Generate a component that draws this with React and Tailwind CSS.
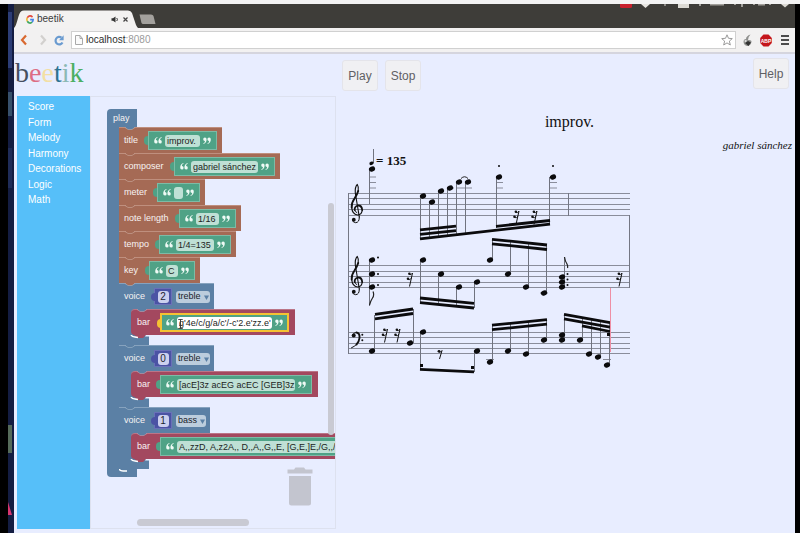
import React from "react";

const sans = "font-['Liberation_Sans',Arial,sans-serif]";

/* ---------- browser chrome ---------- */

function DesktopStrip() {
  return (
    <div className="flex w-[6px] shrink-0 flex-col bg-[#141d42]">
      <div className="mt-2 h-14 w-1 bg-[#2c3d75]" />
      <div className="mt-6 h-6 w-1 bg-[#37506b]" />
      <div className="mt-8 h-10 w-1 bg-[#1f2c58]" />
      <div className="mt-auto h-7 w-1 bg-[#566b5a]" />
      <svg className="mb-4 mt-12 h-4 w-1" viewBox="0 0 4 16" aria-hidden="true">
        <path d="M0 1L4 14H0Z" fill="#d8356f" />
      </svg>
    </div>
  );
}

function GoogleMark() {
  return (
    <svg className="h-[9px] w-[8px]" viewBox="0 0 18 18" preserveAspectRatio="none" fill="none" strokeWidth="3.4" aria-hidden="true">
      <path d="M14.6 4.2A7.2 7.2 0 0 0 3 5.4" stroke="#e2483d" />
      <path d="M3 5.4A7.2 7.2 0 0 0 3 12.6" stroke="#f0b62b" />
      <path d="M3 12.6A7.2 7.2 0 0 0 13.8 14.4" stroke="#3ba55b" />
      <path d="M13.8 14.4A7 7 0 0 0 16.2 9.2H9.4" stroke="#4382e8" />
    </svg>
  );
}

function TabBar() {
  return (
    <div className="relative flex h-6 items-end overflow-hidden bg-[#3e3d39]">
      <div className="relative h-[18px] w-[124px]">
        <svg className="absolute inset-0 h-full w-full" viewBox="0 0 124 18" aria-hidden="true">
          <path d="M0 18C3 16 4 4 7 1.5Q8 0.5 10 0.5H114Q117 0.5 118 3L122 15Q123 17 124 18Z" fill="#f3f2f1" />
        </svg>
        <div className="relative flex h-full items-center pl-[12px] pr-[10px]">
          <GoogleMark />
          <span className={"ml-[3px] flex-1 text-[10px] leading-none text-[#3c3c3c] " + sans}>beetik</span>
          <svg className="h-[7px] w-[8px]" viewBox="0 0 16 14" aria-hidden="true">
            <path d="M1 4.5H4L9 1V13L4 9.500H1Z" fill="#333" />
            <path d="M11.500 4Q14 7 11.500 10" fill="none" stroke="#333" strokeWidth="2" />
          </svg>
          <button aria-label="Close tab" className="ml-[4px]">
            <svg className="h-[5px] w-[5px]" viewBox="0 0 10 10" aria-hidden="true">
              <path d="M1 1L9 9M9 1L1 9" stroke="#444" strokeWidth="2.4" />
            </svg>
          </button>
        </div>
      </div>
      <button aria-label="New tab" className="mb-[3px] h-[11px] w-[18px]">
        <svg className="h-full w-full" viewBox="0 0 18 11" aria-hidden="true">
          <path d="M1.500 0.500H13Q15 0.500 15.500 2L17.500 10H5Q4 10 3.500 9Z" fill="#a3a19d" />
        </svg>
      </button>
      <svg className="absolute right-0 top-0 h-[4px] w-[180px]" viewBox="0 0 180 4" aria-hidden="true">
        <path d="M5 0H17V3Q17 4 15 4H7Q5 4 5 3Z" fill="#c8202c" />
        <path d="M26 0H35L30.500 4Z" fill="#e8e6e2" />
        <path d="M49 0H51V2H49Z" fill="#8a8884" />
        <path d="M63 0H74V4H63Z" fill="#dcdad4" />
        <path d="M84 0H86V2H84ZM95 0H109V1.500H95ZM119 0H121V1H119ZM126 0H128V3H126ZM138 0H140V1H138ZM143 0H150V1.500H143ZM154 0H156V1H154Z" fill="#a19f9a" />
        <path d="M166 0H174L170 3.500Z" fill="#dcdad4" />
      </svg>
    </div>
  );
}

function Toolbar() {
  return (
    <div className="flex h-[26px] items-center border-b-2 border-[#d5d5de] bg-[#f2f1f1]">
      <button aria-label="Back" className="ml-[6px] h-3 w-2">
        <svg className="h-full w-full" viewBox="0 0 8 12" aria-hidden="true">
          <path d="M6 1.500L2 6L6 10.500" fill="none" stroke="#d9692f" strokeWidth="2.200" />
        </svg>
      </button>
      <button aria-label="Forward" className="ml-[11px] h-3 w-2">
        <svg className="h-full w-full" viewBox="0 0 8 12" aria-hidden="true">
          <path d="M2 1.500L6 6L2 10.500" fill="none" stroke="#d2d0ce" strokeWidth="2.200" />
        </svg>
      </button>
      <button aria-label="Reload" className="ml-[7px] h-[11px] w-[10px]">
        <svg className="h-full w-full" viewBox="0 0 10 11" aria-hidden="true">
          <path d="M8.500 7.500A3.700 3.800 0 1 1 7.500 2.600" fill="none" stroke="#6a9bd0" strokeWidth="2.200" />
          <path d="M9.600 0.300V5.200H5Z" fill="#6a9bd0" />
        </svg>
      </button>
      <div className="ml-[7px] flex h-[18px] flex-1 items-center border border-[#d0d0d0] bg-white pl-[3px] pr-[2px]">
        <svg className="h-[10px] w-[8px] shrink-0" viewBox="0 0 8 10" aria-hidden="true">
          <path d="M0.500 0.500H5L7.500 3.500V9.500H0.500ZM5 0.500V3.500H7.500" fill="#fafafa" stroke="#a9a9a9" />
        </svg>
        <div className={"ml-[3px] flex-1 text-[10px] leading-none " + sans}>
          <a href="#address" className="text-[#2d2d2d]">
            localhost<span className="text-[#9b9b9b]">:8080</span>
          </a>
        </div>
        <svg className="h-[12px] w-[12px] shrink-0" viewBox="0 0 12 12" aria-hidden="true">
          <path d="M6 0.800L7.500 4.300L11.300 4.600L8.400 7.100L9.300 11L6 8.900L2.700 11L3.600 7.100L0.700 4.600L4.500 4.300Z" fill="#fff" stroke="#9a9a9a" />
        </svg>
      </div>
      <svg className="ml-[7px] h-[13px] w-[9px]" viewBox="0 0 9 13" aria-hidden="true">
        <path d="M7.500 0.500Q3 2 3 5Q0.500 5 0.500 8Q1 12 5 12Q8.500 11 8.500 7Q7 5.500 5 6Q5 3 7.500 0.500Z" fill="#8f908e" />
        <path d="M2 9L5 7L8 8.500L5.500 12Z" fill="#333" />
        <path d="M1.500 6.500Q3 5.500 4 7L2 8.500Z" fill="#e0e0e0" />
      </svg>
      <svg className="ml-[8px] h-[13px] w-[12px]" viewBox="0 0 12 13" aria-hidden="true">
        <path d="M3.500 0.500H8.500L11.800 4V9L8.500 12.500H3.500L0.200 9V4Z" fill="#c4161c" />
        <text x="6" y="8.500" textAnchor="middle" fontSize="5" fontWeight="700" fill="#fff" fontFamily="Liberation Sans, sans-serif">ABP</text>
      </svg>
      <button aria-label="Menu" className="ml-[9px] mr-[6px] flex w-[8px] flex-col gap-[2px]">
        <span className="h-[2px] bg-[#4c4c4c]" />
        <span className="h-[2px] bg-[#4c4c4c]" />
        <span className="h-[2px] bg-[#4c4c4c]" />
      </button>
    </div>
  );
}

/* ---------- block editor ---------- */

function Quote({ close }) {
  return (
    <svg className={"h-[7px] w-[8px] shrink-0 " + (close ? "rotate-180" : "")} viewBox="0 0 8 7" aria-hidden="true">
      <path d="M3.600 0.400Q1.800 1.200 1.800 2.900A1.700 1.800 0 1 1 0.200 4.600Q0.200 1.200 3.300 0Z" fill="#eefaf5" />
      <path d="M7.800 0.400Q6 1.200 6 2.900A1.700 1.800 0 1 1 4.400 4.600Q4.400 1.200 7.500 0Z" fill="#eefaf5" />
    </svg>
  );
}

function Notch({ className }) {
  return (
    <svg className={"absolute left-[6px] top-[-1px] h-[3px] w-[10px] " + className} viewBox="0 0 10 3" aria-hidden="true">
      <path d="M0 0H10L7 2.500H3Z" fill="currentColor" />
      <path d="M0 0.500L3 2.500H7L10 0.500" fill="none" stroke="#fff" strokeOpacity="0.250" />
    </svg>
  );
}

function TextBlock({ label, value, field, selected }) {
  return (
    <div className={"relative flex h-[19px] shrink-0 items-center bg-[#4fa286] " + (selected ? "border-2 border-[#f5c232] px-[4px]" : "border border-[#7dbba6] px-[5px]")}>
      <span className={"absolute left-[-5px] top-[4px] h-[9px] w-[4px] rounded-l-sm " + (selected ? "bg-[#f5c232]" : "bg-[#4fa286]")} />
      <Quote />
      <input
        aria-label={label}
        defaultValue={value}
        spellCheck={false}
        className={"mx-[3px] h-[12px] rounded-[3px] py-0 pl-[2px] pr-0 text-[9px] leading-none text-[#1c2422] outline-none " + sans + " " + field + " " + (selected ? "bg-white" : "bg-[#bfe0d5]")}
      />
      <Quote close />
    </div>
  );
}

const labelText = "text-[9px] leading-none text-[#f7f3f2] " + sans;

function HeaderRow({ label, value, width, field, prev }) {
  return (
    <div className={"relative flex h-[26px] shrink-0 items-center border-t border-[#bf8f7e] bg-[#a56a55] pl-[5px] pr-[5px] " + width}>
      <Notch className={prev} />
      <span className={"flex-1 whitespace-nowrap " + labelText}>{label}</span>
      <TextBlock label={label} value={value} field={field} />
    </div>
  );
}

function Foot() {
  return (
    <svg className="block h-[10px] w-[30px]" viewBox="0 0 30 10" aria-hidden="true">
      <path d="M0 0H30V10H0Z" fill="#5b80a5" />
      <path d="M15 0H27L24 3H19L16 0.500Z" fill="#a3485f" />
      <path d="M12 0Q13 2 16 2L19 2.500" fill="none" stroke="#fff" strokeWidth="1.500" />
      <path d="M27 0H30V1.500H26Z" fill="#e8edff" />
    </svg>
  );
}

function Voice({ number, clef, width, value, barWidth, field, selected, prev }) {
  return (
    <div className="shrink-0">
      <div className={"relative flex h-[26px] items-center border-t border-[#86a2be] bg-[#5b80a5] pl-[5px] " + width}>
        <Notch className={prev} />
        <span className={labelText}>voice</span>
        <div className="relative ml-auto flex h-[17px] w-[18px] shrink-0 items-center justify-center border border-[#6a70b8] bg-[#4b53a4]">
          <span className="absolute left-[-4px] top-[4px] h-[8px] w-[4px] rounded-l-sm bg-[#4b53a4]" />
          <input aria-label="voice number" defaultValue={number} className={"h-[12px] w-[11px] rounded-[3px] bg-[#ccd0ee] p-0 text-center text-[10px] leading-none text-[#1d1f30] " + sans} />
        </div>
        <div className="relative mx-[4px] shrink-0">
          <select aria-label="clef" defaultValue={clef} className={"block h-[12px] appearance-none rounded-[3px] bg-[#bccddd] pl-[2px] text-[9px] leading-none text-[#1a222b] " + sans + " " + (clef === "bass" ? "w-[30px]" : "w-[34px]")}>
            <option>treble</option>
            <option>bass</option>
          </select>
          <svg className="pointer-events-none absolute right-[1px] top-[4px] h-[5px] w-[5px]" viewBox="0 0 5 5" aria-hidden="true">
            <path d="M0 0.500H5L2.500 5Z" fill="#5b80a5" />
          </svg>
        </div>
      </div>
      <div className="flex h-[26px]">
        <div className="w-[12px] shrink-0 bg-[#5b80a5]" />
        <div className="shrink-0 bg-[#5b80a5]">
          <div className={"relative flex h-[26px] shrink-0 items-center rounded-l-[4px] border-t border-[#bb7587] bg-[#a3485f] pl-[6px] pr-[5px] " + barWidth}>
            <Notch className="text-[#5b80a5]" />
            <span className={"w-[23px] shrink-0 " + labelText}>bar</span>
            <TextBlock label="bar" value={value} field={field} selected={selected} />
          </div>
        </div>
      </div>
      <Foot />
    </div>
  );
}

function PlayBlock() {
  return (
    <div className="relative w-max">
      <div className="flex h-[18px] w-[30px] items-center rounded-tl-[4px] bg-[#5b80a5] pl-[6px]">
        <span className={labelText}>play</span>
      </div>
      <div className="flex">
        <div className="w-[12px] shrink-0 bg-[#5b80a5]" />
        <div className="flex flex-col items-start">
          <HeaderRow label="title" value="improv." width="w-[103px]" field="w-[35px]" prev="text-[#5b80a5]" />
          <HeaderRow label="composer" value="gabriel sánchez" width="w-[161px]" field="w-[67px]" prev="text-[#a56a55]" />
          <HeaderRow label="meter" value="" width="w-[86px]" field="w-[9px]" prev="text-[#a56a55]" />
          <HeaderRow label="note length" value="1/16" width="w-[122px]" field="w-[23px]" prev="text-[#a56a55]" />
          <HeaderRow label="tempo" value="1/4=135" width="w-[117px]" field="w-[38px]" prev="text-[#a56a55]" />
          <HeaderRow label="key" value="C" width="w-[81px]" field="w-[12px]" prev="text-[#a56a55]" />
          <Voice number="2" clef="treble" width="w-[95px]" value="g'4e/c/g/a/c'/-c'2.e'zz.e'" barWidth="w-[164px]" field="w-[95px]" selected prev="text-[#a56a55]" />
          <Voice number="0" clef="treble" width="w-[95px]" value="[acE]3z acEG acEC [GEB]3z" barWidth="w-[187px]" field="w-[118px]" prev="text-[#5b80a5]" />
          <Voice number="1" clef="bass" width="w-[91px]" value="A,,zzD, A,z2A,, D,,A,,G,,E, [G,E,]E,/G,,/F,,/D,,/" barWidth="w-[286px]" field="w-[217px]" prev="text-[#5b80a5]" />
        </div>
      </div>
      <div className="h-[8px] w-[30px] rounded-bl-[4px] bg-[#5b80a5]">
        <svg className="ml-[12px] block h-[3px] w-[18px]" viewBox="0 0 18 3" aria-hidden="true">
          <path d="M0 0Q1 2 4 2H8" fill="none" stroke="#fff" strokeWidth="1.500" />
        </svg>
      </div>
      <svg className="absolute left-[70px] top-[210px] h-[10px] w-[7px]" viewBox="0 0 7 11" aria-hidden="true">
        <path d="M1 0.500H6M3.500 0.500V10.500M1 10.500H6M2 7H5" fill="none" stroke="#333" />
      </svg>
    </div>
  );
}

function Workspace() {
  return (
    <div className="relative min-w-0 flex-1 overflow-hidden border border-[#dde1ef] pl-[16px] pt-[12px]">
      <PlayBlock />
      <div className="absolute right-[1px] top-[106px] h-[232px] w-[6px] rounded-full bg-[#c9cad3]" />
      <div className="absolute bottom-[2px] left-[46px] h-[7px] w-[112px] rounded-full bg-[#c9cad3]" />
      <svg className="absolute bottom-[22px] right-[22px] h-[39px] w-[26px]" viewBox="0 0 26 39" aria-hidden="true">
        <path d="M0.500 2.500H7L8.500 0.500H17L18.500 2.500H25.500V6.500H0.500Z" fill="#c3c5cf" />
        <path d="M2 9H24V36Q24 38.500 21.500 38.500H4.500Q2 38.500 2 36Z" fill="#c3c5cf" />
      </svg>
    </div>
  );
}

function Toolbox() {
  const items = ["Score", "Form", "Melody", "Harmony", "Decorations", "Logic", "Math"];
  return (
    <nav className="w-[73px] shrink-0 bg-[#56bff9] pl-[11px] pt-[3px]">
      <ul>
        {items.map((t) => (
          <li key={t} className="mb-px flex h-[15px] items-center last:mb-0 nth-[2n]:mb-0">
            <a href="#toolbox" className={"text-[10px] leading-none text-white " + sans}>{t}</a>
          </li>
        ))}
      </ul>
    </nav>
  );
}

/* ---------- score ---------- */

const heads = [
  [372, 169], [423, 196], [432, 202], [441, 191], [450, 188], [459, 182], [468, 182], [499, 177], [553, 177],
  [372, 260], [372, 274], [372, 287], [423, 260], [441, 274], [459, 287], [477, 282],
  [490, 260], [508, 274], [526, 287], [544, 293], [562, 277], [562, 282], [562, 287],
  [372, 351], [410, 343], [423, 332], [477, 351], [490, 362], [508, 351], [526, 354], [544, 340],
  [562, 335], [562, 340], [580, 340], [589, 354], [598, 357], [607, 365],
];

const stems = [
  [369.5, 169, 204], [373.5, 149, 163], [420.5, 196, 239], [429.5, 202, 238], [438.5, 191, 237], [447.5, 188, 236],
  [456.5, 182, 235], [465.5, 182, 234], [496.5, 177, 228], [549.5, 177, 224],
  [369.5, 260, 306], [420.5, 260, 302], [438.5, 274, 303], [456.5, 287, 306], [474.5, 282, 308],
  [492.5, 240, 260], [510.5, 242, 274], [528.5, 244, 287], [546.5, 246, 293], [564.5, 257, 287],
  [374.5, 315, 351], [413.5, 309, 343], [420.5, 332, 370], [474.5, 351, 372],
  [492.5, 325, 362], [510.5, 324, 351], [528.5, 322, 354], [546.5, 320, 340],
  [564.5, 314, 340], [582.5, 318, 340], [591.5, 320, 354], [600.5, 321, 357], [609.5, 323, 365],
];

const beams = [
  [420, 229.8, 456, 226.2], [420, 234.3, 456, 230.7], [420, 238.8, 550, 224.2], [496, 226.3, 550, 220.5],
  [420, 298, 474, 303.3], [420, 302.7, 474, 308], [492, 239.3, 547, 245], [492, 243.8, 547, 249.5],
  [375, 314.3, 413, 309], [375, 318.8, 413, 313.5], [420, 369.3, 474, 371.8],
  [492, 325.2, 547, 319.7], [492, 329.7, 547, 324.2],
  [564, 314.3, 610, 322.7], [564, 318.8, 610, 327.2], [582, 325.8, 610, 331.5],
];

const ledgers = [
  [369, 376, 177], [369, 376, 182.5], [369, 376, 188], [447, 454, 188], [456, 472, 188],
  [496, 503, 182.5], [496, 503, 188], [550, 557, 182.5], [550, 557, 188],
  [540, 548, 293], [486, 494, 359.5], [603, 611, 359.5],
];

const dots = [
  [499, 166], [553, 166], [378, 257.5], [378, 274], [378, 285], [567.5, 274], [567.5, 279.5], [567.5, 285],
];

const staves = [[193.5, 198.5, 204.5, 209.5, 215.5], [265.5, 271.5, 276.5, 282.5, 287.5], [332.5, 337.5, 343.5, 348.5, 353.5]];

function TrebleClef({ dy }) {
  return (
    <g transform={`translate(0 ${dy})`} fill="none" stroke="#111" strokeLinecap="round">
      <path d="M359.300 217L355.300 193Q354.800 187 357.300 184.500Q359 187 358.200 191" strokeWidth="1.100" />
      <path d="M358.200 191Q357 195 354.500 198.500Q351.500 202.500 351.700 207.500" strokeWidth="1.900" />
      <path d="M351.700 207.500Q352.300 214.500 357.500 215Q362 214.700 362.200 210" strokeWidth="1.200" />
      <path d="M362.200 210Q361.800 205.300 358 205.500Q354.300 206.500 354.700 210" strokeWidth="1.800" />
      <path d="M354.700 210Q355 212 356.800 212.600" strokeWidth="1" />
      <path d="M359.300 217Q359.500 222.500 355.600 222.700Q352.500 222.500 352.500 219.700" strokeWidth="1" />
      <circle cx="353.800" cy="219.700" r="1.900" fill="#111" stroke="none" />
    </g>
  );
}

function SixteenthRest({ x, y }) {
  return (
    <g transform={`translate(${x} ${y})`} stroke="#111" fill="none">
      <path d="M2.500 -6L-0.500 7.500" strokeWidth="1" />
      <path d="M2.500 -6Q1 -3.500 -0.500 -4.500M1.500 -1Q0 1.500 -2 0.500" strokeWidth="0.900" />
      <circle cx="-0.600" cy="-5.300" r="1.300" fill="#111" stroke="none" />
      <circle cx="-2" cy="-0.300" r="1.300" fill="#111" stroke="none" />
    </g>
  );
}

function Score() {
  return (
    <svg role="img" aria-label="Sheet music" className="-mt-[5px] ml-[4px] block h-[232px] w-[300px]" viewBox="340 148 300 232">
      <g stroke="#8a8d9b" strokeWidth="1">
        {staves.flat().map((y) => <line key={y} x1="348" x2="630" y1={y} y2={y} />)}
        <path d="M348.500 193V354M568.500 193V216M629.500 215V288" stroke="#747784" />
        {ledgers.map(([a, b, y], i) => <line key={i} x1={a} x2={b} y1={y} y2={y} />)}
      </g>
      <g stroke="#70737f">
        {stems.map(([x, a, b], i) => <line key={i} x1={x} x2={x} y1={a} y2={b} />)}
      </g>
      <g stroke="#0b0b0d" strokeWidth="2.800">
        {beams.map(([a, b, c, d], i) => <line key={i} x1={a} y1={b} x2={c} y2={d} />)}
      </g>
      <g fill="#0b0b0d">
        {heads.map(([x, y], i) => <ellipse key={i} cx={x} cy={y} rx="3.200" ry="2.500" transform={`rotate(-25 ${x} ${y})`} />)}
        <ellipse cx="371.500" cy="163.300" rx="2.200" ry="1.700" transform="rotate(-25 371.500 163.300)" />
        {dots.map(([x, y], i) => <circle key={i} cx={x} cy={y} r="1" />)}
        <rect x="420" y="364" width="3" height="3" />
        <rect x="471" y="366" width="3" height="3" />
        <rect x="607" y="333" width="3" height="3" />
      </g>
      <path d="M461 178.500Q464.500 175 468 178.500" fill="none" stroke="#222" />
      <path d="M369.500 305Q370.500 301 372.500 298Q374.500 295 373 291.500M564.500 257Q565 261 567 264Q568 266 567.500 268" fill="none" stroke="#222" strokeWidth="1.200" />
      <TrebleClef dy={0} />
      <TrebleClef dy={72} />
      <g fill="none" stroke="#111" strokeLinecap="round">
        <path d="M352.500 335Q353.500 332.300 356.500 332.500" strokeWidth="1" />
        <path d="M356.500 332.500Q360 333 359.500 338Q359 342 356.500 344.500" strokeWidth="1.900" />
        <path d="M356.500 344.500Q354.500 346.500 351.500 347.800" strokeWidth="1" />
        <circle cx="353.700" cy="335.500" r="2" fill="#111" stroke="none" />
        <circle cx="362.300" cy="334.700" r="1" fill="#111" stroke="none" />
        <circle cx="362.300" cy="340.300" r="1" fill="#111" stroke="none" />
      </g>
      <SixteenthRest x={516.5} y={217} />
      <SixteenthRest x={534.5} y={217} />
      <SixteenthRest x={410} y={279} />
      <SixteenthRest x={619.5} y={279} />
      <SixteenthRest x={385} y={335} />
      <SixteenthRest x={397.5} y={335} />
      <path d="M442 350.500L439.500 359M442 350.500Q440.500 353 439 352" fill="none" stroke="#111" />
      <circle cx="439" cy="351.300" r="1.400" fill="#111" />
      <line x1="610.500" x2="610.500" y1="288" y2="352" stroke="#ee8fa4" />
      <text x="376" y="165" fontSize="13" fontWeight="700" fill="#111" fontFamily="Liberation Serif, serif">= 135</text>
    </svg>
  );
}

function ActionButton({ children }) {
  return (
    <button className={"h-[31px] w-[36px] rounded-[3px] border border-[#e4e4ea] bg-[#f0f0f3] text-[12px] leading-none text-[#5f5f64] " + sans}>
      {children}
    </button>
  );
}

export default function App() {
  return (
    <div className="flex min-h-screen flex-col bg-black">
      <div className="h-1 bg-[#f3f3f3]" />
      <div className="flex flex-1">
        <div className="w-2 shrink-0 bg-black" />
        <DesktopStrip />
        <div className="flex min-w-0 flex-1 flex-col bg-[#e8edff]">
          <TabBar />
          <Toolbar />
          <main className="flex flex-1">
            <section className="flex w-[322px] shrink-0 flex-col pb-[4px]">
              <h1 className="flex h-[42px] items-center pb-[4px] pl-[1px] font-['Liberation_Serif',serif] text-[28px] leading-none">
                <span className="text-[#46505f]">b</span>
                <span className="text-[#dd6d85]">e</span>
                <span className="text-[#f3dfa4]">e</span>
                <span className="text-[#2c7391]">t</span>
                <span className="text-[#8db9b4]">i</span>
                <span className="text-[#4caf62]">k</span>
              </h1>
              <div className="flex flex-1 pl-[3px]">
                <Toolbox />
                <Workspace />
              </div>
            </section>
            <section className="min-w-0 flex-1">
              <div className="flex justify-between px-[6px] pt-[4px]">
                <div className="flex gap-[7px] pt-[2px]">
                  <ActionButton>Play</ActionButton>
                  <ActionButton>Stop</ActionButton>
                </div>
                <ActionButton>Help</ActionButton>
              </div>
              <h2 className="mt-[21px] pl-[8px] text-center font-['Liberation_Serif',serif] text-[16px] leading-5 text-[#111]">improv.</h2>
              <p className="mt-[5px] pr-[3px] text-right font-['Liberation_Serif',serif] text-[11px] italic leading-4 text-[#111]">gabriel sánchez</p>
              <Score />
            </section>
          </main>
        </div>
        <div className="w-[5px] shrink-0 bg-black" />
      </div>
    </div>
  );
}
